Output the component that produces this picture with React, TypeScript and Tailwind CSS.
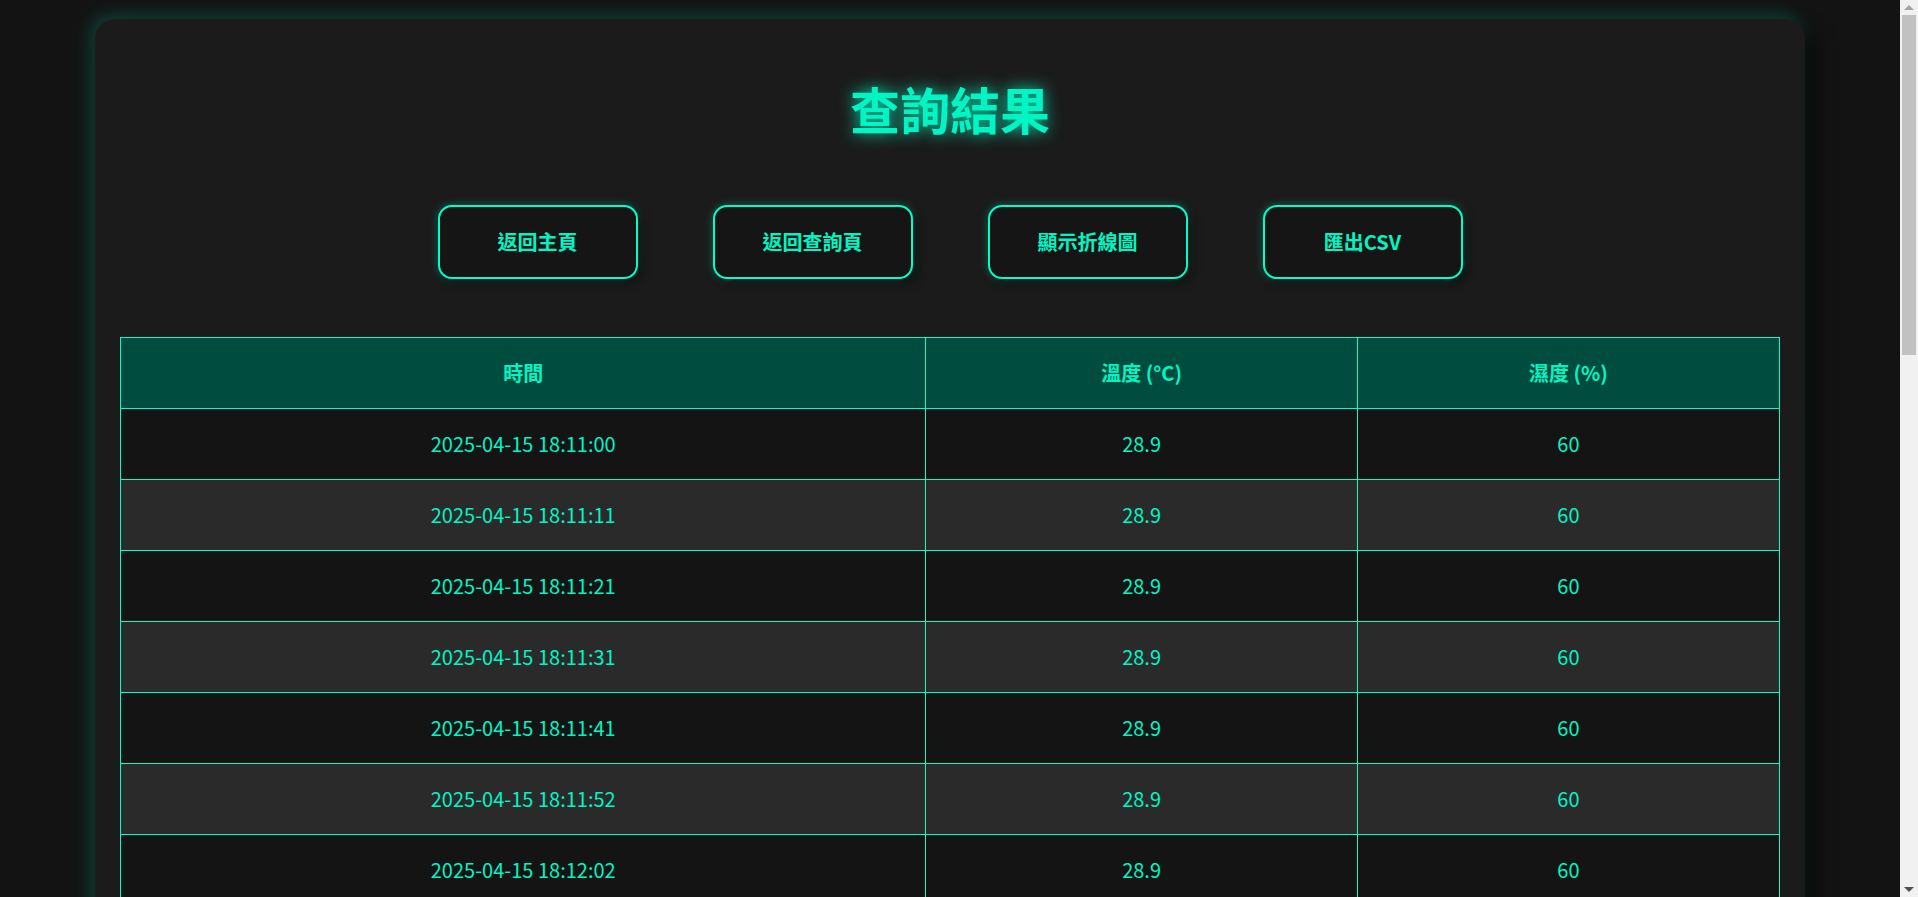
import React from "react";

interface Reading {
  time: string;
  temp: string;
  humidity: string;
}

const times = [
  "18:11:00", "18:11:11", "18:11:21", "18:11:31", "18:11:41", "18:11:52",
  "18:12:02", "18:12:12", "18:12:22", "18:12:33", "18:12:43", "18:12:53",
  "18:13:03", "18:13:14", "18:13:24", "18:13:34",
];

const rows: Reading[] = times.map((t) => ({
  time: `2025-04-15 ${t}`,
  temp: "28.9",
  humidity: "60",
}));

const buttons = ["返回主頁", "返回查詢頁", "顯示折線圖", "匯出CSV"];

const App: React.FC = () => {
  return (
    <div
      className="flex h-screen bg-[#131313]"
      style={{ fontFamily: '"Noto Sans CJK TC", "Noto Sans", sans-serif' }}
    >
      <main className="flex-1 overflow-y-auto py-[19px] [scrollbar-width:none]">
        <div className="mx-auto w-[90%] rounded-[20px] bg-[#1b1b1b] px-[25px] pt-[53px] pb-[40px] shadow-[10px_10px_20px_rgba(0,0,0,0.6),-4px_-4px_18px_rgba(0,255,200,0.22)]">
          <h1 className="text-center text-[50px] font-bold leading-[72px] text-[#00f5c4] [text-shadow:0_0_16px_rgba(0,255,200,0.85)]">
            查詢結果
          </h1>

          <div className="mt-[61px] flex justify-center gap-[75px]">
            {buttons.map((label) => (
              <button
                key={label}
                type="button"
                className="h-[74px] w-[200px] rounded-[14px] border-2 border-[#00ffcc] bg-[#151515] text-[20px] font-bold text-[#00f5c4] shadow-[4px_4px_8px_rgba(0,0,0,0.6),0_0_8px_rgba(0,255,200,0.35)]"
              >
                {label}
              </button>
            ))}
          </div>

          <table className="mt-[58px] w-full border-collapse border border-[#00ffcc] text-center text-[20px] text-[#00f5c4]">
            <thead>
              <tr className="bg-[#004d40]">
                <th className="w-[48.55%] border border-[#00ffcc] py-[20px] font-bold leading-[30px]">時間</th>
                <th className="w-[26%] border border-[#00ffcc] py-[20px] font-bold leading-[30px]">溫度 (°C)</th>
                <th className="border border-[#00ffcc] py-[20px] font-bold leading-[30px]">濕度 (%)</th>
              </tr>
            </thead>
            <tbody>
              {rows.map((r, i) => (
                <tr key={i} className={i % 2 === 0 ? "bg-[#141414]" : "bg-[#2a2a2a]"}>
                  <td className="border border-[#00ffcc] py-[20px] leading-[30px]">{r.time}</td>
                  <td className="border border-[#00ffcc] py-[20px] leading-[30px]">{r.temp}</td>
                  <td className="border border-[#00ffcc] py-[20px] leading-[30px]">{r.humidity}</td>
                </tr>
              ))}
            </tbody>
          </table>
        </div>
      </main>

      {/* scrollbar track */}
      <div className="flex w-[18px] shrink-0 flex-col bg-[#f1f1f1]">
        <div className="flex h-[15px] items-center justify-center">
          <div className="h-0 w-0 border-x-[5px] border-b-[5px] border-x-transparent border-b-[#a3a3a3]" />
        </div>
        <div className="mx-[2px] h-[340px] bg-[#c1c1c1]" />
        <div className="flex-1" />
        <div className="flex h-[15px] items-center justify-center">
          <div className="h-0 w-0 border-x-[5px] border-t-[5px] border-x-transparent border-t-[#505050]" />
        </div>
      </div>
    </div>
  );
};

export default App;
